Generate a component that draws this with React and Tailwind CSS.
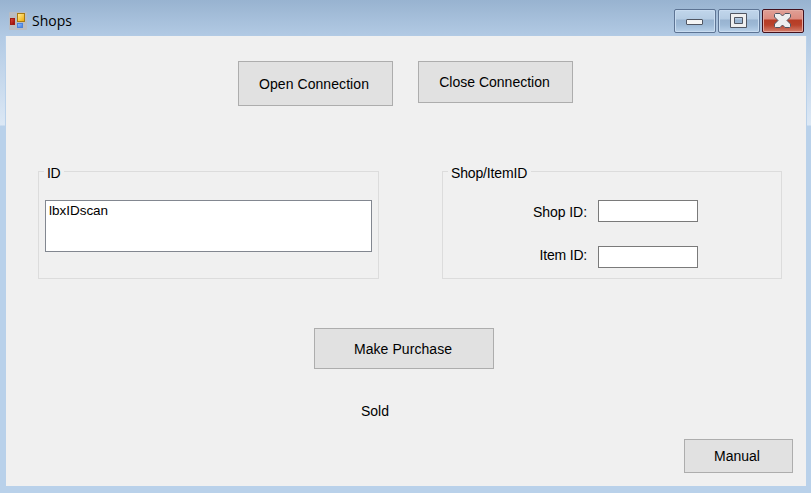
import React from "react";

const buttonBase =
  "flex items-center justify-center border border-[#adadad] bg-[#e1e1e1] whitespace-nowrap";

function FormIcon() {
  return (
    <svg width="18" height="18" viewBox="0 0 18 18" className="shrink-0">
      <defs>
        <linearGradient id="gold" x1="0" y1="0" x2="1" y2="1">
          <stop offset="0" stopColor="#fff0a0" />
          <stop offset="1" stopColor="#f0a800" />
        </linearGradient>
        <linearGradient id="red" x1="0" y1="0" x2="1" y2="1">
          <stop offset="0" stopColor="#e5443a" />
          <stop offset="1" stopColor="#8d0800" />
        </linearGradient>
        <linearGradient id="blue" x1="0" y1="0" x2="1" y2="1">
          <stop offset="0" stopColor="#9cc4ff" />
          <stop offset="1" stopColor="#3c78dc" />
        </linearGradient>
      </defs>
      <rect width="18" height="18" rx="1" fill="#b9bdc3" />
      <rect x="1.5" y="6.5" width="4" height="6" fill="url(#red)" stroke="#a31b13" />
      <rect x="8.5" y="1.5" width="7" height="8" fill="url(#gold)" stroke="#a87a10" />
      <rect x="8.5" y="11.5" width="5" height="4" fill="url(#blue)" stroke="#4a82dc" />
    </svg>
  );
}

function CaptionButton({ close, children }) {
  const tone = close
    ? "border-[#43101c] bg-[linear-gradient(#dfa096_0,#dc8a7e_9px,#b63c25_10px,#b9422b_15px,#d4806e_100%)] shadow-[inset_0_0_0_1px_#e5aaa0]"
    : "border-[#5d7494] bg-[linear-gradient(#c1d6eb_0,#b5cce3_9px,#98b3d0_10px,#9db9d6_15px,#b9d1e9_100%)] shadow-[inset_0_0_0_1px_#c9dcf0]";
  return (
    <div className={"flex h-6 w-[42px] items-center justify-center rounded-[2px] border " + tone}>
      {children}
    </div>
  );
}

function TitleBar() {
  return (
    <div className="flex h-9 w-full shrink-0 items-start pl-[9px] pr-[7px]">
      <div className="flex pt-3">
        <FormIcon />
      </div>
      <div className="ml-[5px] pt-3 font-['Open_Sans','Noto_Sans',sans-serif] text-[14px] leading-[18px]">
        Shops
      </div>
      <div className="ml-auto flex gap-0.5 pt-[9px]">
        <CaptionButton>
          <svg width="40" height="22">
            <rect x="11.5" y="9.5" width="16" height="5" rx="0.5" fill="#f4f4f4" stroke="#505561" />
          </svg>
        </CaptionButton>
        <CaptionButton>
          <svg width="40" height="22">
            <path
              d="M11.5 3.5h16v14h-16z M15.5 7.5v6h8v-6z"
              fillRule="evenodd"
              fill="#efefef"
              stroke="#505561"
            />
          </svg>
        </CaptionButton>
        <CaptionButton close>
          <svg width="40" height="22">
            <path
              d="M12.5 3.5h4.5l2.5 2.5 2.5-2.5h4.5l1 1v2.5l-3.5 3.5 3.5 3.5v2.5l-1 1H22l-2.5-2.5-2.5 2.5h-4.5l-1-1V14l3.5-3.5L11.5 7V4.5z"
              fill="#eeeeee"
              stroke="#505561"
            />
          </svg>
        </CaptionButton>
      </div>
    </div>
  );
}

function GroupBox({ title, titleClass, className, children }) {
  return (
    <div className={"h-[108px] border border-[#dcdcdc] " + className}>
      <div className={"-mt-[8px] ml-[5px] h-[18px] w-fit bg-[#f0f0f0] pl-[3px] pr-1 " + titleClass}>
        {title}
      </div>
      {children}
    </div>
  );
}

export default function App() {
  return (
    <div className="h-[494px] w-[811px] overflow-hidden bg-white font-['Liberation_Sans',Arial,sans-serif] text-[14px] leading-[18px] text-black">
      <div className="flex h-[493px] flex-col bg-[linear-gradient(#98b3d0_0,#b2cae4_36px,#dce8f5_125px,#b9d1ea_126px)]">
        <TitleBar />
        <div className="ml-[5px] h-[451px] w-[802px] bg-[#b9d1ea] px-px pb-px">
          <main className="flex h-[450px] w-full flex-col bg-[#f0f0f0]">
            <div className="flex items-start gap-[25px] pl-[232px] pt-[25px]">
              <button className={buttonBase + " h-[45px] w-[155px] pr-[3px] tracking-[0.07px]"}>
                Open Connection
              </button>
              <button className={buttonBase + " h-[42px] w-[155px] pb-px pr-0.5"}>
                Close Connection
              </button>
            </div>

            <div className="mt-[65px] flex gap-[63px] pl-8">
              <GroupBox title="ID" titleClass="tracking-[-0.4px]" className="w-[341px]">
                <div className="ml-1.5 mt-[18px] h-[52px] w-[327px] border border-[#828790] bg-white pl-[3px] pt-px text-[13.5px] tracking-[-0.02px]">
                  lbxIDscan
                </div>
              </GroupBox>
              <GroupBox title="Shop/ItemID" titleClass="tracking-[-0.15px]" className="w-[340px]">
                <div className="mt-[18px] flex h-[22px] items-center">
                  <label className="ml-[80px] mt-px w-[64px] text-right tracking-[-0.05px]">Shop ID:</label>
                  <input className="ml-[11px] h-[22px] w-[100px] border border-[#7a7a7a] bg-white outline-none" />
                </div>
                <div className="mt-6 flex h-[22px] items-center">
                  <label className="-mt-[5px] ml-[80px] w-[64px] text-right tracking-[-0.2px]">Item ID:</label>
                  <input className="ml-[11px] h-[22px] w-[100px] border border-[#7a7a7a] bg-white outline-none" />
                </div>
              </GroupBox>
            </div>

            <button className={buttonBase + " ml-[308px] mt-[49px] h-[41px] w-[180px] pr-0.5 pt-px tracking-[0.07px]"}>
              Make Purchase
            </button>
            <div className="ml-[355px] mt-[33px]">Sold</div>
            <button className={buttonBase + " ml-[678px] mt-[19px] h-[34px] w-[109px] pb-px pr-[3px]"}>
              Manual
            </button>
          </main>
        </div>
      </div>
    </div>
  );
}
